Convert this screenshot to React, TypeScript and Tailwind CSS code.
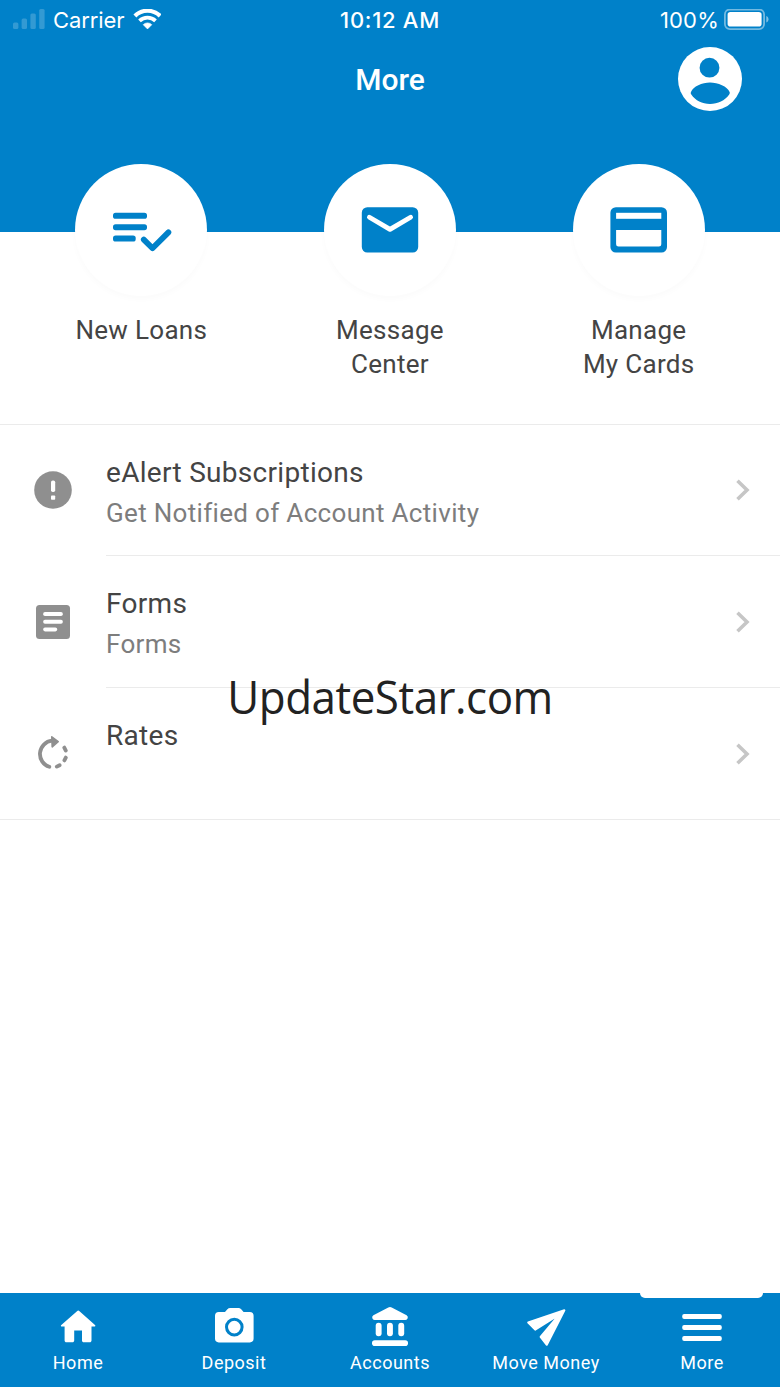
import type { ReactNode } from 'react';

function LoansIcon() {
  return (
    <svg width="66" height="66" viewBox="0 0 66 66" fill="currentColor">
      <rect x="5" y="15.8" width="34" height="6" rx="2.6" />
      <rect x="5" y="27.2" width="34" height="6" rx="2.6" />
      <rect x="5" y="38.6" width="22.7" height="6" rx="2.6" />
      <path d="M35.8 42.6 44.5 51.2 60.4 35.4" fill="none" stroke="currentColor" strokeWidth="5.8" strokeLinecap="round" strokeLinejoin="round" />
    </svg>
  );
}

function MailIcon() {
  return (
    <svg width="66" height="66" viewBox="0 0 66 66">
      <rect x="4.8" y="10.2" width="56.4" height="45.4" rx="5.5" fill="currentColor" />
      <path d="M12.4 20.2 33 32.4 53.6 20.2" fill="none" stroke="#fff" strokeWidth="4.8" strokeLinecap="round" strokeLinejoin="round" />
    </svg>
  );
}

function CardIcon() {
  return (
    <svg width="66" height="66" viewBox="0 0 66 66">
      <rect x="4.4" y="10.2" width="56.6" height="45.4" rx="5.5" fill="currentColor" />
      <rect x="10.1" y="15.8" width="45.2" height="6" fill="#fff" />
      <path d="M10.1 33h45.2v14.2a2.4 2.4 0 0 1-2.4 2.4H12.5a2.4 2.4 0 0 1-2.4-2.4z" fill="#fff" />
    </svg>
  );
}

function AlertIcon() {
  return (
    <svg width="40" height="40" viewBox="0 0 40 40">
      <circle cx="20" cy="20" r="18.8" fill="currentColor" />
      <rect x="18" y="10.4" width="4.2" height="11.6" rx="1.8" fill="#fff" />
      <rect x="18" y="25.4" width="4.2" height="4.4" rx="0.8" fill="#fff" />
    </svg>
  );
}

function FormsIcon() {
  return (
    <svg width="40" height="40" viewBox="0 0 40 40">
      <rect x="3" y="3" width="34" height="34" rx="3.5" fill="currentColor" />
      <g fill="#fff">
        <rect x="10.2" y="10" width="19.6" height="4" rx="1.8" />
        <rect x="10.2" y="17.8" width="19.6" height="4" rx="1.8" />
        <rect x="10.2" y="25.4" width="14" height="4" rx="1.8" />
      </g>
    </svg>
  );
}

function RatesIcon() {
  return (
    <svg width="40" height="40" viewBox="0 0 40 40" fill="none" stroke="currentColor" strokeWidth="3.8" strokeLinecap="round">
      <path d="M19 6.7A13.4 13.4 0 0 0 16.3 32.8" />
      <path d="M18.8 2.8 25.2 7.6 19.2 12.8z" fill="currentColor" strokeWidth="1.6" strokeLinejoin="round" />
      <path d="M31.3 13.6 32.8 16.6M32.8 23.6 31.4 26.4M26.6 31.2 23.8 32.6" />
    </svg>
  );
}

function HomeIcon() {
  return (
    <svg width="44" height="44" viewBox="0 0 44 44" fill="currentColor">
      <path d="M21 6.2a1.8 1.8 0 0 1 2.5 0L39 19.9c.7.7.4 1.7-.6 1.7h-2.9v13.9c0 1-.8 1.8-1.8 1.8h-5.9c-1 0-1.8-.8-1.8-1.8v-9.9h-7.8v9.9c0 1-.8 1.8-1.8 1.8h-6c-1 0-1.8-.8-1.8-1.8V21.6H5.9c-1 0-1.4-1-.6-1.7z" />
    </svg>
  );
}

function CameraIcon() {
  return (
    <svg width="44" height="44" viewBox="0 0 44 44">
      <path d="m13 7 2.4-2.7c.7-.8 1.7-1.2 2.8-1.2h8.2c1 0 2 .4 2.8 1.2L31.6 7h6.2a3.8 3.8 0 0 1 3.8 3.8v22.8a3.8 3.8 0 0 1-3.8 3.8h-31A3.8 3.8 0 0 1 3 33.6V10.8A3.8 3.8 0 0 1 6.8 7z" fill="currentColor" />
      <circle cx="22.3" cy="22.1" r="7.8" fill="none" stroke="#0081c9" strokeWidth="3" />
    </svg>
  );
}

function BankIcon() {
  return (
    <svg width="44" height="44" viewBox="0 0 44 44" fill="currentColor">
      <path d="M20.3 2.5a3.6 3.6 0 0 1 3.4 0L38.6 10.2a2.6 2.6 0 0 1-1.2 4.8H6.6a2.6 2.6 0 0 1-1.2-4.8z" />
      <rect x="7.7" y="17.8" width="5.9" height="13.4" rx="2.9" />
      <rect x="19" y="17.8" width="5.9" height="13.4" rx="2.9" />
      <rect x="30.3" y="17.8" width="5.9" height="13.4" rx="2.9" />
      <rect x="4" y="35.3" width="36" height="5.7" rx="2.8" />
    </svg>
  );
}

function PlaneIcon() {
  return (
    <svg width="44" height="44" viewBox="0 0 44 44" fill="currentColor" stroke="currentColor" strokeWidth="2" strokeLinejoin="round">
      <path d="M40.4 5.3 4.2 17.5 11.2 24.6 35.5 9.4 16.6 32 22.8 39.8z" />
    </svg>
  );
}

function MenuIcon() {
  return (
    <svg width="44" height="44" viewBox="0 0 44 44" fill="currentColor">
      <rect x="2.2" y="9" width="39.6" height="4.9" rx="2" />
      <rect x="2.2" y="20" width="39.6" height="4.9" rx="2" />
      <rect x="2.2" y="31" width="39.6" height="4.9" rx="2" />
    </svg>
  );
}

const shortcuts: { lines: string[]; icon: ReactNode }[] = [
  { lines: ['New Loans'], icon: <LoansIcon /> },
  { lines: ['Message', 'Center'], icon: <MailIcon /> },
  { lines: ['Manage', 'My Cards'], icon: <CardIcon /> },
];

const rows: { title: string; subtitle?: string; icon: ReactNode }[] = [
  { title: 'eAlert Subscriptions', subtitle: 'Get Notified of Account Activity', icon: <AlertIcon /> },
  { title: 'Forms', subtitle: 'Forms', icon: <FormsIcon /> },
  { title: 'Rates', icon: <RatesIcon /> },
];

const tabs: { label: string; icon: ReactNode; active?: boolean }[] = [
  { label: 'Home', icon: <HomeIcon /> },
  { label: 'Deposit', icon: <CameraIcon /> },
  { label: 'Accounts', icon: <BankIcon /> },
  { label: 'Move Money', icon: <PlaneIcon /> },
  { label: 'More', icon: <MenuIcon />, active: true },
];

function StatusBar() {
  return (
    <div className="grid h-10 grid-cols-3 items-center pl-[13px] pr-[11px] font-['Inter',sans-serif] text-[22px] leading-10">
      <div className="flex items-center">
        <svg width="32" height="22" viewBox="0 0 32 22" fill="#fff" fillOpacity="0.2">
          <rect x="0" y="13.5" width="5.4" height="6.5" rx="1.5" />
          <rect x="8.6" y="9.5" width="5.4" height="10.5" rx="1.5" />
          <rect x="17.4" y="4.5" width="5.4" height="15.5" rx="1.5" />
          <rect x="26.2" y="0" width="5.4" height="20" rx="1.5" />
        </svg>
        <span className="ml-2 tracking-[-0.1px]">Carrier</span>
        <svg className="ml-[9px]" width="28" height="22" viewBox="0 0 28 22" fill="none" stroke="#fff" strokeWidth="4.2">
          <path d="M1.9 6.9A18 18 0 0 1 27.1 6.9" />
          <path d="M6.5 11.8A11.6 11.6 0 0 1 22.5 11.8" strokeWidth="3.8" />
          <path d="M14.5 19.9 10.3 15.7a6 6 0 0 1 8.4 0z" fill="#fff" stroke="#fff" strokeWidth="0.8" strokeLinejoin="round" />
        </svg>
      </div>
      <div className="-ml-0.5 text-center font-medium tracking-[0.7px]">10:12 AM</div>
      <div className="flex items-center justify-end">
        <span className="tracking-[0.2px]">100%</span>
        <svg className="ml-[5px]" width="45" height="22" viewBox="0 0 45 22">
          <rect x="0.9" y="0.5" width="39.2" height="19.6" rx="5" fill="none" stroke="#fff" strokeOpacity="0.45" strokeWidth="1.8" />
          <rect x="3.6" y="3.1" width="34" height="14.4" rx="2.8" fill="#fff" />
          <path d="M42.3 7v6.600c1.400-.5 2.200-1.800 2.200-3.300s-.8-2.800-2.200-3.300z" fill="#fff" fillOpacity="0.5" />
        </svg>
      </div>
    </div>
  );
}

export default function App() {
  return (
    <div className="relative flex h-[1387px] w-[780px] flex-col overflow-hidden bg-white font-['Roboto',sans-serif]">
      <header className="h-[232px] shrink-0 bg-[#0081c9] text-white">
        <StatusBar />
        <div className="grid h-20 grid-cols-3 items-center px-[38px]">
          <h1 className="col-start-2 text-center text-[30px] font-medium leading-9 tracking-[-0.1px]">More</h1>
          <button className="mb-0.5 justify-self-end" aria-label="Profile">
            <svg className="block" width="64" height="64" viewBox="0 0 64 64">
              <circle cx="32" cy="32" r="32" fill="#fff" />
              <g fill="#0081c9">
                <circle cx="31.5" cy="20.7" r="9.9" />
                <path d="M13 45C15 39.4 24.2 35.5 32 35.5S49.6 39.4 51.6 45C52 46 51.8 46.6 51.2 47.5 46.8 53.5 40 57 32 57S17.6 53.5 13.3 47.5C12.6 46.6 12.6 46 13 45z" />
              </g>
            </svg>
          </button>
        </div>
      </header>

      {/* Shortcuts straddle the bottom edge of the header */}
      <section className="-mt-[68px] grid h-[261px] shrink-0 grid-cols-3 border-b border-[#ebebeb] px-[17px]">
        {shortcuts.map((item) => (
          <button key={item.lines[0]} className="flex flex-col items-center">
            <span className="flex size-[132px] items-center justify-center rounded-full bg-white text-[#0081c9] shadow-[0_3px_6px_rgba(0,0,0,0.02)]">
              {item.icon}
            </span>
            <span className="mt-[17px] text-[26px] leading-[34px] tracking-[0.3px] text-[#444]">
              {item.lines.map((line) => (
                <span key={line} className="block">{line}</span>
              ))}
            </span>
          </button>
        ))}
      </section>

      <ul className="border-b border-[#ebebeb]">
        {rows.map((row, i) => (
          <li key={row.title} className={`flex pl-[33px] ${i > 0 ? 'h-[132px]' : 'h-[130px]'}`}>
            <div className={`flex w-[73px] shrink-0 items-center text-[#8f8f8f] ${i > 0 ? 'pt-px' : ''}`}>{row.icon}</div>
            <div className={`flex flex-1 items-center justify-between pr-[29px] ${i > 0 ? 'border-t border-[#ebebeb]' : ''}`}>
              <div className="mt-[5px] h-20">
                <div className="text-[28px] leading-10 tracking-[0.3px] text-[#444]">{row.title}</div>
                {row.subtitle && <div className="text-[26px] leading-10 tracking-[0.32px] text-[#7d7d7d]">{row.subtitle}</div>}
              </div>
              <svg width="16" height="24" viewBox="0 0 16 24" fill="none" stroke="#c6c6c6" strokeWidth="3.6">
                <path d="M2.5 2.8 12 12 2.5 21.2" />
              </svg>
            </div>
          </li>
        ))}
      </ul>

      <nav className="mt-auto grid h-[94.5px] shrink-0 grid-cols-5 bg-[#0081c9] text-white">
        {tabs.map((tab) => (
          <button key={tab.label} className="relative flex flex-col items-center pt-[12.5px]">
            {tab.active && <span className="absolute left-4 top-0 h-[5.5px] w-[123px] rounded-b-[5px] bg-white" />}
            {tab.icon}
            <span className="mt-0.5 text-[18px] leading-6 tracking-[0.5px]">{tab.label}</span>
          </button>
        ))}
      </nav>

      <div className="pointer-events-none absolute inset-x-0 top-[666px] scale-x-[0.955] text-center font-['Open_Sans',sans-serif] text-[46px] leading-[60px] tracking-[-0.5px] text-[#222]">
        UpdateStar.com
      </div>
    </div>
  );
}
